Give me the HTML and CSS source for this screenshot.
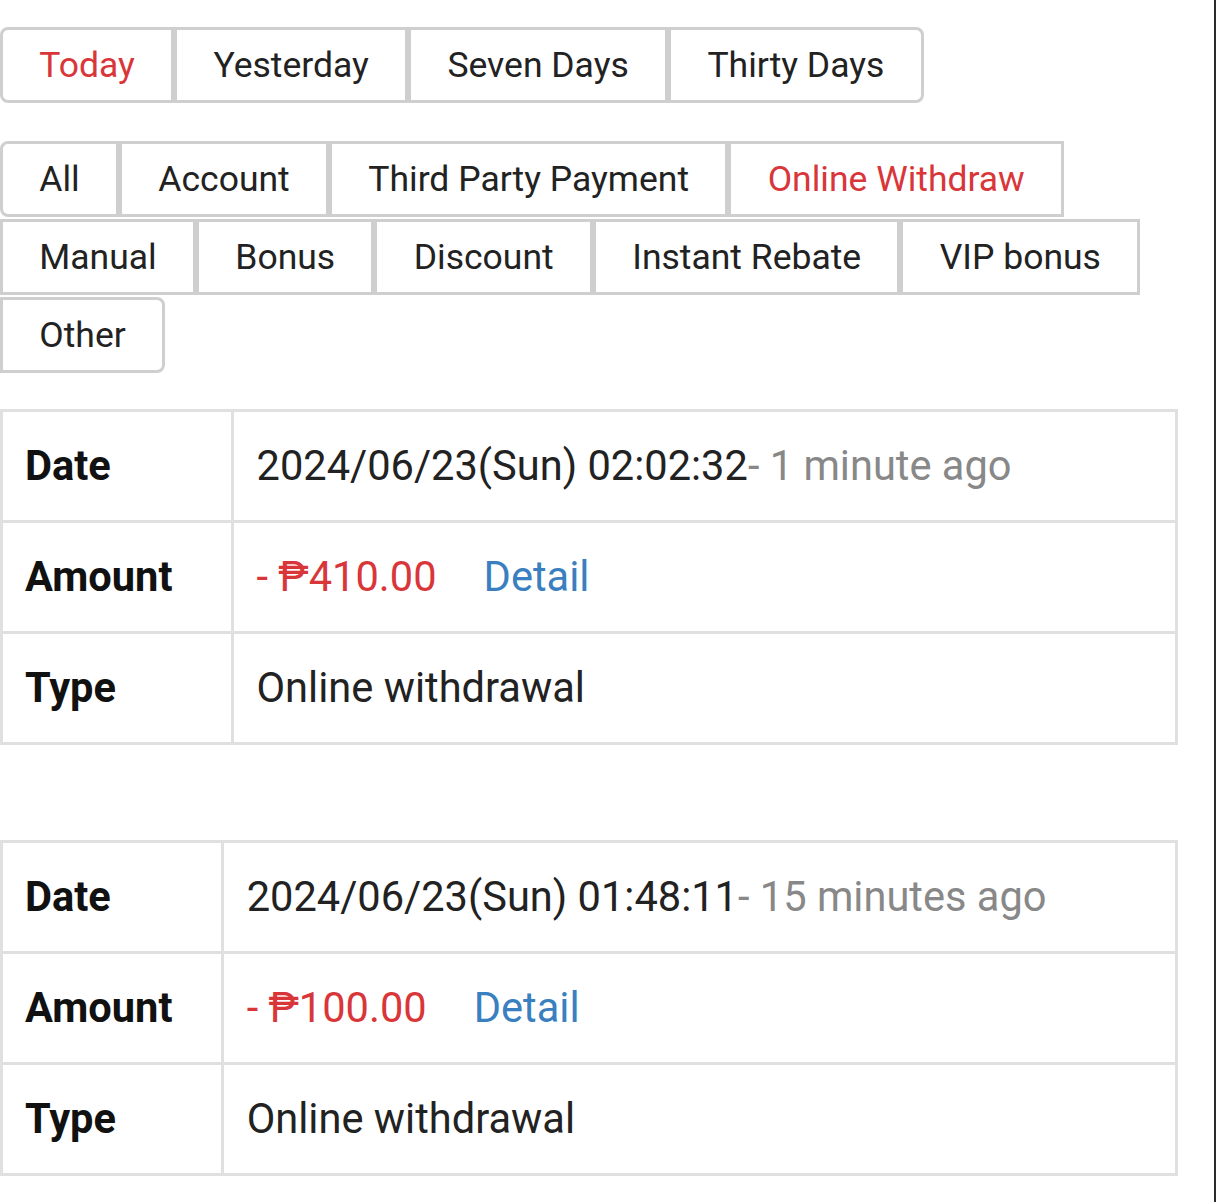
FILE: index.html
```html
<!DOCTYPE html>
<html lang="en">
<head>
<meta charset="utf-8">
<title>Transactions</title>
<link rel="stylesheet" href="styles.css">
</head>
<body>
<div class="page">
  <div class="btn-group period">
    <button class="btn active">Today</button>
    <button class="btn">Yesterday</button>
    <button class="btn">Seven Days</button>
    <button class="btn">Thirty Days</button>
  </div>

  <div class="btn-group types">
    <button class="btn first">All</button>
    <button class="btn">Account</button>
    <button class="btn">Third Party Payment</button>
    <button class="btn active">Online Withdraw</button>
    <button class="btn">Manual</button>
    <button class="btn">Bonus</button>
    <button class="btn">Discount</button>
    <button class="btn">Instant Rebate</button>
    <button class="btn">VIP bonus</button>
    <button class="btn last">Other</button>
  </div>

  <table class="record">
    <tr>
      <th>Date</th>
      <td>2024/06/23(Sun) 02:02:32<span class="ago">- 1 minute ago</span></td>
    </tr>
    <tr>
      <th>Amount</th>
      <td><span class="amount">- ₱410.00</span><a class="detail" href="#">Detail</a></td>
    </tr>
    <tr>
      <th>Type</th>
      <td>Online withdrawal</td>
    </tr>
  </table>

  <table class="record">
    <tr>
      <th>Date</th>
      <td>2024/06/23(Sun) 01:48:11<span class="ago">- 15 minutes ago</span></td>
    </tr>
    <tr>
      <th>Amount</th>
      <td><span class="amount">- ₱100.00</span><a class="detail" href="#">Detail</a></td>
    </tr>
    <tr>
      <th>Type</th>
      <td>Online withdrawal</td>
    </tr>
  </table>
</div>
</body>
</html>
```

FILE: styles.css
```css
html, body {
  margin: 0;
  padding: 0;
  height: 100%;
  background: #ffffff;
}

body {
  box-sizing: border-box;
  width: 1216px;
  border-right: 2px solid #2b2b2b;
  font-family: Roboto, "Liberation Sans", Arial, sans-serif;
  color: #222222;
  overflow: hidden;
}

.page {
  width: 1178px;
  padding-top: 27px;
}

.btn-group {
  display: flex;
  flex-wrap: wrap;
  row-gap: 2px;
}

.btn-group.period {
  margin-bottom: 38px;
}

.btn-group.types {
  margin-bottom: 36px;
}

.btn {
  box-sizing: border-box;
  height: 76px;
  padding: 0 36.3px;
  margin: 0;
  font-family: Roboto, "Liberation Sans", Arial, sans-serif;
  font-size: 35.5px;
  color: #222222;
  background: #ffffff;
  border: 3px solid #cfcfcf;
  border-radius: 0;
  cursor: pointer;
}

.period .btn:first-child,
.btn.first {
  border-top-left-radius: 8px;
  border-bottom-left-radius: 8px;
}

.period .btn:last-child,
.btn.last {
  border-top-right-radius: 8px;
  border-bottom-right-radius: 8px;
}

.btn.active {
  color: #d9363a;
}

.record {
  width: 100%;
  border-collapse: collapse;
  font-size: 41.6px;
  line-height: 58px;
  margin-bottom: 95px;
}

.record th,
.record td {
  border: 3px solid #e0e0e0;
  padding: 25px 24px 25px 23px;
  text-align: left;
  vertical-align: middle;
  white-space: nowrap;
}

.record th {
  font-weight: 700;
  color: #111111;
  padding-left: 22px;
}

.record td {
  font-weight: 400;
  color: #222222;
}

.ago {
  color: #888888;
}

.amount {
  color: #d9363a;
}

.detail {
  color: #3a7fc0;
  text-decoration: none;
  margin-left: 47px;
}
```
